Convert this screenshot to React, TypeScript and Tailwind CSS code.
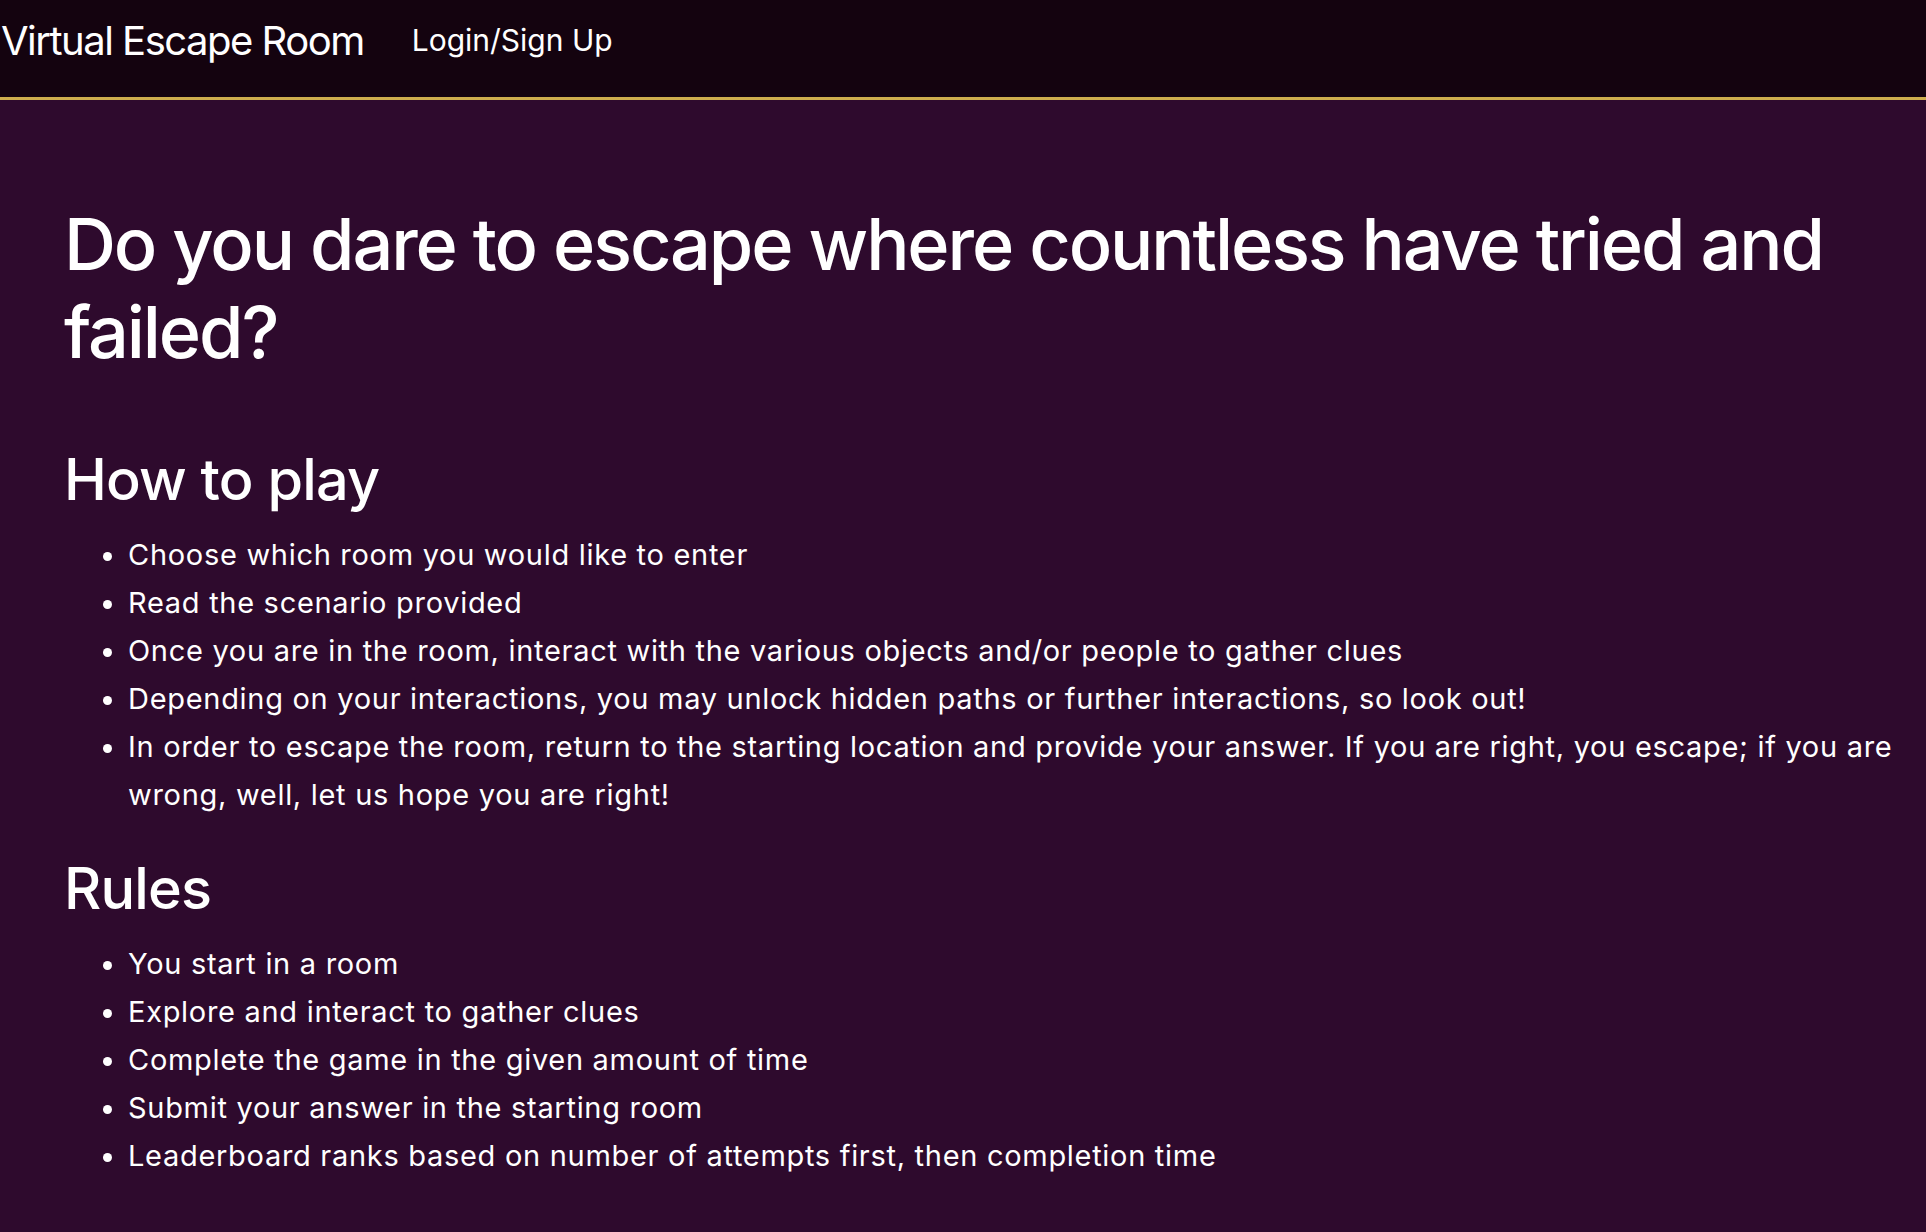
import React from "react";

const howToPlay = [
  "Choose which room you would like to enter",
  "Read the scenario provided",
  "Once you are in the room, interact with the various objects and/or people to gather clues",
  "Depending on your interactions, you may unlock hidden paths or further interactions, so look out!",
  "In order to escape the room, return to the starting location and provide your answer. If you are right, you escape; if you are wrong, well, let us hope you are right!",
];

const rules = [
  "You start in a room",
  "Explore and interact to gather clues",
  "Complete the game in the given amount of time",
  "Submit your answer in the starting room",
  "Leaderboard ranks based on number of attempts first, then completion time",
];

export default function App() {
  return (
    <div className="min-h-screen bg-[#2e0a2d] text-white font-['Inter',sans-serif]">
      {/* Top nav */}
      <header className="flex items-center h-[100px] pb-[16px] bg-[#14030f] border-b-[3px] border-[#cfae4e]">
        <span className="text-[40px] leading-[60px] pl-[1px] tracking-[-1.5px]">Virtual Escape Room</span>
        <a className="ml-[48px] text-[30px] leading-[45px] cursor-pointer">Login/Sign Up</a>
      </header>

      <main className="pl-[64px] pr-[24px] pt-[100px] pb-[40px]">
        <h1 className="text-[72px] leading-[88px] font-medium tracking-[-2.1px]">
          Do you dare to escape where countless have tried and failed?
        </h1>

        <h2 className="mt-[69px] text-[57.6px] leading-[69px] font-medium tracking-[-0.8px]">How to play</h2>
        <ul className="mt-[17px] list-disc pl-[64px] text-[29px] leading-[48px] tracking-[0.7px]">
          {howToPlay.map((item) => (
            <li key={item}>{item}</li>
          ))}
        </ul>

        <h2 className="mt-[35px] text-[57.6px] leading-[69px] font-medium tracking-[-0.8px]">Rules</h2>
        <ul className="mt-[17px] list-disc pl-[64px] text-[29px] leading-[48px] tracking-[0.7px]">
          {rules.map((item) => (
            <li key={item}>{item}</li>
          ))}
        </ul>
      </main>
    </div>
  );
}
